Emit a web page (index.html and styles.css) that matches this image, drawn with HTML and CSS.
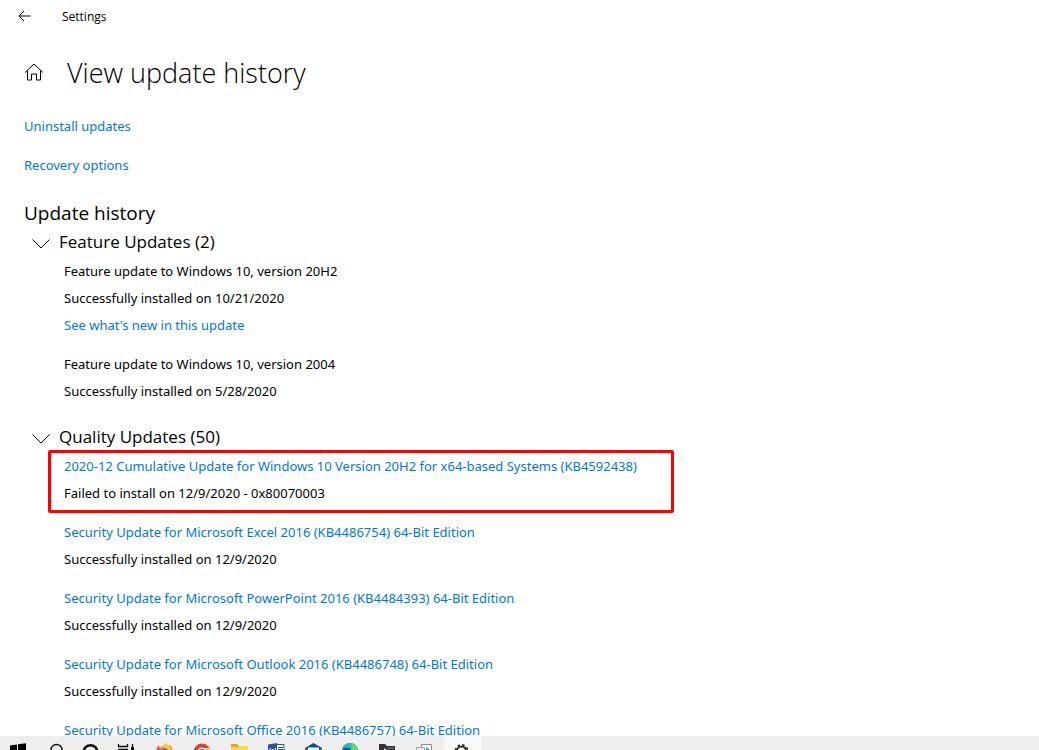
FILE: index.html
```
<!DOCTYPE html>
<html lang="en">
<head>
    <meta charset="UTF-8">
    <meta name="viewport" content="width=device-width, initial-scale=1.0">
    <title>Settings</title>
    <link rel="stylesheet" href="styles.css">
</head>
<body>
    <div class="window">
        <header class="titlebar">
            <button type="button" aria-label="Back">
                <svg width="14" height="12" viewBox="0 0 14 12"><path d="M12.500 6H1M6 1L1 6l5 5"/></svg>
            </button>
            <span class="app-name">Settings</span>
        </header>

        <main class="content">
            <div class="page-heading">
                <button type="button" aria-label="Home">
                    <svg width="20" height="18" viewBox="0 0 20 18"><path d="M1 9.500L10 1l9 8.500M3.500 7.500v9.500h4v-6h5v6h4V7.500"/></svg>
                </button>
                <h1>View update history</h1>
            </div>

            <nav class="page-links">
                <a href="#">Uninstall updates</a>
                <a href="#">Recovery options</a>
            </nav>

            <h2>Update history</h2>

            <section class="group">
                <button class="group-toggle" type="button" aria-expanded="true">
                    <svg width="18" height="10" viewBox="0 0 18 10"><path d="M0.500 0.500L9 9l8.500-8.500"/></svg>
                    <span>Feature Updates (2)</span>
                </button>
                <div class="update">
                    <p>Feature update to Windows 10, version 20H2</p>
                    <p>Successfully installed on 10/21/2020</p>
                    <a href="#">See what's new in this update</a>
                </div>
                <div class="update">
                    <p>Feature update to Windows 10, version 2004</p>
                    <p>Successfully installed on 5/28/2020</p>
                </div>
            </section>

            <section class="group">
                <button class="group-toggle" type="button" aria-expanded="true">
                    <svg width="18" height="10" viewBox="0 0 18 10"><path d="M0.500 0.500L9 9l8.500-8.500"/></svg>
                    <span>Quality Updates (50)</span>
                </button>
                <div class="update failed">
                    <a href="#">2020-12 Cumulative Update for Windows 10 Version 20H2 for x64-based Systems (KB4592438)</a>
                    <p>Failed to install on 12/9/2020 - 0x80070003</p>
                </div>
                <div class="update">
                    <a href="#">Security Update for Microsoft Excel 2016 (KB4486754) 64-Bit Edition</a>
                    <p>Successfully installed on 12/9/2020</p>
                </div>
                <div class="update">
                    <a href="#">Security Update for Microsoft PowerPoint 2016 (KB4484393) 64-Bit Edition</a>
                    <p>Successfully installed on 12/9/2020</p>
                </div>
                <div class="update">
                    <a href="#">Security Update for Microsoft Outlook 2016 (KB4486748) 64-Bit Edition</a>
                    <p>Successfully installed on 12/9/2020</p>
                </div>
                <div class="update">
                    <a href="#">Security Update for Microsoft Office 2016 (KB4486757) 64-Bit Edition</a>
                </div>
            </section>
        </main>

        <footer class="taskbar">
            <button type="button" aria-label="Start">
                <svg width="37" height="30" viewBox="0 0 37 30" stroke="none" fill="#000"><path d="M10 9.500l7-1V15h-7zM18 8.300l8-1.100V15h-8zM10 16h7v7l-7-1zM18 16h8v8l-8-1z"/></svg>
            </button>
            <button type="button" aria-label="Search">
                <svg width="37" height="30" viewBox="0 0 37 30" fill="none" stroke="#111" stroke-width="1.400"><circle cx="19.500" cy="14" r="5.500"/><path d="M15.500 18l-5 6"/></svg>
            </button>
            <button type="button" aria-label="Cortana">
                <svg width="37" height="30" viewBox="0 0 37 30" fill="none" stroke="#111" stroke-width="2.600"><circle cx="16.500" cy="16" r="6.800"/></svg>
            </button>
            <button type="button" aria-label="Task View">
                <svg width="37" height="30" viewBox="0 0 37 30" fill="none" stroke="#111" stroke-width="1.300"><path d="M7.500 8v2.500h9V8M7.500 20v-6.500h9V20zM21.500 8v14"/><path d="M20 11h3v3h-3z" fill="#111" stroke="none"/></svg>
            </button>
            <button type="button" aria-label="Firefox">
                <svg width="37" height="30" viewBox="0 0 37 30"><path d="M8 17c0-4 1-6 2.500-8l1.500 2 3-1 2-3 3 3 2-1c2 2 3 5 3 8a8.500 8.500 0 0 1-17 0z" fill="#ff9a2e"/><path d="M15 10l2-3c3 2 6 4 7 9l-5 2z" fill="#ffcb2f"/><path d="M9 11h2l2 3-3 3-2-1z" fill="#ff4f5e"/><circle cx="16.500" cy="15.500" r="3.500" fill="#8a4be0"/></svg>
            </button>
            <button type="button" aria-label="Chrome">
                <svg width="37" height="30" viewBox="0 0 37 30"><circle cx="17" cy="15.500" r="8" fill="#db4437"/><path d="M10 11.500l5 8-1 4a8 8 0 0 1-4-12z" fill="#0f9d58"/><path d="M17 12h7.200a8 8 0 0 1-9 11.300z" fill="#ffcd40"/><circle cx="17" cy="15.500" r="4" fill="#fff"/><circle cx="17" cy="15.500" r="3" fill="#4285f4"/></svg>
            </button>
            <button type="button" aria-label="File Explorer">
                <svg width="37" height="30" viewBox="0 0 37 30"><path d="M9 8h6l2 2h9v12H9z" fill="#e8a917"/><path d="M9 11h7l1-1h9v12H9z" fill="#ffd65c"/></svg>
            </button>
            <button type="button" aria-label="Word">
                <svg width="37" height="30" viewBox="0 0 37 30"><path d="M17 8.500h8v14h-8z" fill="#fff" stroke="#2b579a"/><path d="M19 11.500h5M19 13.500h5" stroke="#2b579a"/><path d="M9 8.500l9-1.500v17l-9-1.500z" fill="#2b579a"/><path d="M11 12l1.200 6 1.500-5 1.500 5 1.300-6" fill="none" stroke="#fff"/></svg>
            </button>
            <button type="button" aria-label="Mail">
                <svg width="37" height="30" viewBox="0 0 37 30"><path d="M9 12l8.500-5 8.500 5v11H9z" fill="#0a4f94"/><path d="M12 11.500h11V17H12z" fill="#fff"/><path d="M9 12l8.500 5 8.500-5v11H9z" fill="#1389e0"/></svg>
            </button>
            <button type="button" aria-label="Edge">
                <svg width="37" height="30" viewBox="0 0 37 30"><circle cx="17" cy="15" r="8" fill="#1681d2"/><path d="M9 14c1-9 15-9 16 0 0 3-4 4-7 3 1-5-5-7-9-3z" fill="#29b5c9"/><path d="M18 7.200c4 .4 7 3.500 7 6.800 0 3-4 4-6 3z" fill="#62d957"/><path d="M9 14c3-4 9-3 9 1-3 0-4 4-2 8-4 0-7-4-7-9z" fill="#0c59a4"/></svg>
            </button>
            <button type="button" aria-label="Folder">
                <svg width="37" height="30" viewBox="0 0 37 30"><path d="M9 8h6l2 2h8v12H9z" fill="#30343a"/><path d="M17 11h7v2h-7z" fill="#555b63"/><path d="M14 12l3 2-3 2z" fill="#ddd"/></svg>
            </button>
            <button type="button" aria-label="Remote Desktop">
                <svg width="37" height="30" viewBox="0 0 37 30"><path d="M14.500 8.500h10v9h-10z" fill="#fff" stroke="#8b9097"/><path d="M9.500 11.500h8v9h-8z" fill="#e8eaed" stroke="#a0a4a8"/><path d="M18 14l2-3 3 3z" fill="#4aa3d8"/></svg>
            </button>
            <button class="active" type="button" aria-label="Settings">
                <svg width="37" height="30" viewBox="0 0 37 30" fill="none" stroke="#333"><circle cx="17.500" cy="15" r="4.500" stroke-width="2"/><circle cx="17.500" cy="15" r="6" stroke-width="2" stroke-dasharray="2.350 2.360"/></svg>
            </button>
        </footer>
    </div>
</body>
</html>
```
FILE: styles.css
```
* {
    box-sizing: border-box;
}
body {
    margin: 0;
    font-family: "Noto Sans", "Open Sans", sans-serif;
    font-size: 13px;
    line-height: 27px;
    color: #000;
    background-color: #fff;
}
h1, h2, p {
    margin: 0;
    font-weight: normal;
}
a {
    color: #0078d7;
    text-decoration: none;
}
button {
    padding: 0;
    border: none;
    background: none;
    font: inherit;
    color: inherit;
}
svg {
    display: block;
}
.window {
    display: flex;
    flex-direction: column;
    height: 100vh;
    overflow: hidden;
}
.titlebar svg, .content svg {
    fill: none;
    stroke: #000;
}
.titlebar {
    display: flex;
    align-items: center;
    gap: 30px;
    height: 32px;
    padding-left: 18px;
}
.app-name {
    font-family: "Open Sans", sans-serif;
    font-size: 12px;
}
.content {
    flex: 1;
    min-height: 0;
    overflow: hidden;
    padding: 20px 24px 0;
}
.page-heading {
    display: flex;
    align-items: center;
    gap: 23px;
    height: 40px;
}
h1 {
    font-family: "Open Sans", sans-serif;
    font-size: 27px;
    font-weight: 300;
}
.page-links {
    display: flex;
    flex-direction: column;
    align-items: flex-start;
    gap: 12px;
    padding: 21px 0;
}
h2 {
    font-family: "Open Sans", sans-serif;
    font-size: 19px;
}
.group {
    margin-bottom: 17px;
}
.group-toggle {
    display: flex;
    align-items: center;
    gap: 9px;
    height: 28px;
    margin-bottom: 3px;
    padding-left: 8px;
    font-family: "Open Sans", sans-serif;
    font-size: 17px;
}
.group-toggle svg {
    margin-top: 6px;
}
.update {
    margin-bottom: 12px;
    padding-left: 40px;
}
.update a {
    display: block;
}
.failed {
    width: fit-content;
    margin: -3px 0 6px 24px;
    padding: 0 34px 3px 13px;
    border: 3px solid #ff0000;
    border-radius: 2px;
}
.taskbar {
    display: flex;
    height: 14px;
    overflow: hidden;
    background-color: #eeeeee;
}
.taskbar button {
    display: flex;
    height: 30px;
}
.taskbar .active {
    background-color: #f9f9f9;
}
```
